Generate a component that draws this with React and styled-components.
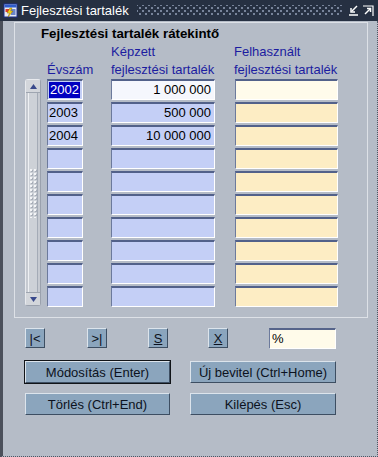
import React from "react";
import styled, { createGlobalStyle } from "styled-components";

const GlobalStyle = createGlobalStyle`
  html, body {
    margin: 0;
    padding: 0;
    background: #b5bcc7;
  }
  body {
    font-family: "Liberation Sans", Arial, sans-serif;
  }
`;

const Window = styled.div`
  width: 378px;
  height: 457px;
  display: flex;
  flex-direction: column;
  background: #b5bcc7;
  overflow: hidden;
`;

const TitleBar = styled.div`
  height: 21px;
  flex: none;
  display: flex;
  align-items: center;
  padding: 0 3px 0 3px;
  background: #263042;
  color: #ffffff;
  font-size: 13px;
`;

const TitleText = styled.span`
  margin-left: 3px;
  white-space: nowrap;
`;

const TitleDots = styled.div`
  flex: 1;
  height: 11px;
  margin: 0 6px 0 8px;
  background-image: radial-gradient(circle, #77839a 0.9px, transparent 1.1px),
    radial-gradient(circle, #77839a 0.9px, transparent 1.1px);
  background-size: 6px 6px;
  background-position: 0 0, 3px 3px;
`;

const TitleButtons = styled.div`
  display: flex;
  gap: 2px;
`;

const Body = styled.div`
  flex: 1;
  box-sizing: border-box;
  border-left: 3px solid #4b505b;
  border-right: 1px dotted #4e5563;
  border-bottom: 1px dotted #4e5563;
  padding: 1px 0 0 11px;
`;

const Panel = styled.div`
  box-sizing: border-box;
  width: 354px;
  height: 296px;
  border: 1px solid #dde1e7;
  padding: 1px 0 0 10px;
`;

const Heading = styled.div`
  margin-left: 16px;
  font-size: 13.3px;
  font-weight: bold;
  line-height: 19px;
  color: #000000;
`;

const Table = styled.div`
  display: grid;
  grid-template-columns: 22px 64px 124px 103px;
  grid-template-rows: 36px repeat(10, 23px);
`;

const HeaderCell = styled.div`
  align-self: end;
  font-size: 13px;
  line-height: 18px;
  color: #1c1ca0;
  white-space: nowrap;
  margin-left: ${(p) => p.$shift || 0}px;
`;

const Cell = styled.div`
  box-sizing: border-box;
  width: ${(p) => p.$width}px;
  height: 21px;
  border-top: 2px solid #52618a;
  border-left: 1px solid #6c7a9c;
  border-right: 1px solid #ffffff;
  border-bottom: 1px solid #ffffff;
  background: ${(p) => p.$bg};
  font-size: 13px;
  line-height: 17px;
  color: #000000;
  text-align: ${(p) => p.$align || "left"};
  padding: 0 3px 0 1px;
  white-space: nowrap;
`;

const Selected = styled.span`
  display: inline-block;
  line-height: 16px;
  background: #0000c0;
  color: #ffffff;
  padding: 0 1px;
`;

const ScrollBar = styled.div`
  grid-column: 1;
  grid-row: 2 / span 10;
  box-sizing: border-box;
  width: 16px;
  height: 227px;
  display: flex;
  flex-direction: column;
  background: #c6cad1;
  border: 1px solid #e8eaee;
  border-right-color: #9aa1ad;
  border-bottom-color: #9aa1ad;
  border-radius: 3px;
`;

const ScrollArrow = styled.div`
  height: 12px;
  flex: none;
  display: flex;
  align-items: center;
  justify-content: center;
  background: #d3d6db;
  border-bottom: ${(p) => (p.$down ? "none" : "1px solid #9ea5b0")};
  border-top: ${(p) => (p.$down ? "1px solid #9ea5b0" : "none")};
`;

const ScrollTrack = styled.div`
  flex: 1;
  display: flex;
  align-items: center;
  justify-content: center;
  margin: 0 2px;
  border-left: 1px solid #eef0f3;
  border-right: 1px solid #a4abb6;
  background: #cdd1d7;
`;

const Grip = styled.div`
  width: 10px;
  height: 50px;
  background-image: radial-gradient(circle, #f4f5f7 0.9px, transparent 1.2px),
    radial-gradient(circle, #a9afb9 0.8px, transparent 1.1px);
  background-size: 4px 4px;
  background-position: 0 0, 1px 1px;
`;

const Controls = styled.div`
  margin: 10px 0 0 11px;
`;

const NavRow = styled.div`
  display: grid;
  grid-template-columns: 62px 61px 60px 61px 67px;
  align-items: start;
`;

const NavButton = styled.button`
  box-sizing: border-box;
  width: 20px;
  height: 20px;
  padding: 0;
  background: #8ba5bd;
  border: 1px solid;
  border-color: #dce4ec #3d4e62 #3d4e62 #dce4ec;
  font-family: "Liberation Sans", Arial, sans-serif;
  font-size: 13px;
  color: #0c1220;
  text-decoration: ${(p) => (p.$underline ? "underline" : "none")};
`;

const Field = styled.div`
  box-sizing: border-box;
  width: 67px;
  height: 21px;
  border-top: 2px solid #56648a;
  border-left: 1px solid #6c7a9c;
  border-right: 1px solid #ffffff;
  border-bottom: 1px solid #ffffff;
  background: #fffbea;
  font-size: 13px;
  line-height: 17px;
  padding-left: 2px;
  color: #000000;
`;

const ButtonGrid = styled.div`
  display: grid;
  grid-template-columns: 145px 146px;
  column-gap: 20px;
  row-gap: 10px;
  margin-top: 12px;
`;

const ActionButton = styled.button`
  box-sizing: border-box;
  height: 22px;
  padding: 0;
  background: #8ba5bd;
  border: 1px solid;
  border-color: #dce4ec #3d4e62 #3d4e62 #dce4ec;
  font-family: "Liberation Sans", Arial, sans-serif;
  font-size: 13px;
  color: #0c1220;
  box-shadow: ${(p) => (p.$default ? "0 0 0 1px #111418" : "none")};
`;

const AppIcon = () => (
  <svg width="15" height="15" viewBox="0 0 15 15">
    <rect x="1" y="1" width="13" height="13" fill="#e8ecf4" stroke="#1c2f8c" />
    <rect x="1.5" y="1.5" width="12" height="3" fill="#2e5ccc" />
    <rect x="2.5" y="6" width="4" height="3" fill="#d83a2a" />
    <rect x="8" y="6" width="4.5" height="6" fill="#6c86c8" />
    <polygon points="7,5 4,10 6.5,10 5,14 10,8 7.5,8 9,5" fill="#f6d21a" stroke="#8a6a00" strokeWidth="0.5" />
  </svg>
);

const MinimizeIcon = () => (
  <svg width="12" height="13" viewBox="0 0 12 13">
    <path d="M9 2 L4 7" stroke="#ffffff" strokeWidth="1.5" />
    <path d="M3 4 L3 8 L7 8" stroke="#ffffff" strokeWidth="1.5" fill="none" />
    <path d="M1 11 H10" stroke="#ffffff" strokeWidth="1.5" />
  </svg>
);

const MaximizeIcon = () => (
  <svg width="13" height="13" viewBox="0 0 13 13">
    <path d="M1 2 H11 V12" stroke="#ffffff" strokeWidth="1.2" fill="none" />
    <path d="M3 10 L8.5 4.5" stroke="#ffffff" strokeWidth="1.5" />
    <path d="M5 4.5 H8.5 V8" stroke="#ffffff" strokeWidth="1.5" fill="none" />
  </svg>
);

const ArrowUp = () => (
  <svg width="7" height="5" viewBox="0 0 7 5">
    <polygon points="3.5,0 7,5 0,5" fill="#3a4a8c" />
  </svg>
);

const ArrowDown = () => (
  <svg width="7" height="5" viewBox="0 0 7 5">
    <polygon points="0,0 7,0 3.5,5" fill="#3a4a8c" />
  </svg>
);

const rows = [
  ["2002", "1 000 000", ""],
  ["2003", "500 000", ""],
  ["2004", "10 000 000", ""],
  ["", "", ""],
  ["", "", ""],
  ["", "", ""],
  ["", "", ""],
  ["", "", ""],
  ["", "", ""],
  ["", "", ""],
];

const App = () => {
  return (
    <>
      <GlobalStyle />
      <Window>
        <TitleBar>
          <AppIcon />
          <TitleText>Fejlesztési tartalék</TitleText>
          <TitleDots />
          <TitleButtons>
            <MinimizeIcon />
            <MaximizeIcon />
          </TitleButtons>
        </TitleBar>

        <Body>
          <Panel>
            <Heading>Fejlesztési tartalék rátekintő</Heading>
            <Table>
              <div />
              <HeaderCell>Évszám</HeaderCell>
              <HeaderCell>
                Képzett
                <br />
                fejlesztési tartalék
              </HeaderCell>
              <HeaderCell $shift={-1}>
                Felhasznált
                <br />
                fejlesztési tartalék
              </HeaderCell>

              <ScrollBar>
                <ScrollArrow>
                  <ArrowUp />
                </ScrollArrow>
                <ScrollTrack>
                  <Grip />
                </ScrollTrack>
                <ScrollArrow $down>
                  <ArrowDown />
                </ScrollArrow>
              </ScrollBar>

              {rows.map((row, i) => (
                <React.Fragment key={i}>
                  <Cell $width={36} $bg="#c4cff6" style={{ gridColumn: 2 }}>
                    {i === 0 ? <Selected>{row[0]}</Selected> : row[0]}
                  </Cell>
                  <Cell $width={104} $bg={i === 0 ? "#f5f7fd" : "#c4cff6"} $align="right">
                    {row[1]}
                  </Cell>
                  <Cell $width={103} $bg={i === 0 ? "#fffbeb" : "#fdedc4"}>
                    {row[2]}
                  </Cell>
                </React.Fragment>
              ))}
            </Table>
          </Panel>

          <Controls>
            <NavRow>
              <NavButton>|&lt;</NavButton>
              <NavButton>&gt;|</NavButton>
              <NavButton $underline>S</NavButton>
              <NavButton $underline>X</NavButton>
              <Field>%</Field>
            </NavRow>
            <ButtonGrid>
              <ActionButton $default>Módosítás (Enter)</ActionButton>
              <ActionButton>Új bevitel (Ctrl+Home)</ActionButton>
              <ActionButton>Törlés (Ctrl+End)</ActionButton>
              <ActionButton>Kilépés (Esc)</ActionButton>
            </ButtonGrid>
          </Controls>
        </Body>
      </Window>
    </>
  );
};

export default App;
